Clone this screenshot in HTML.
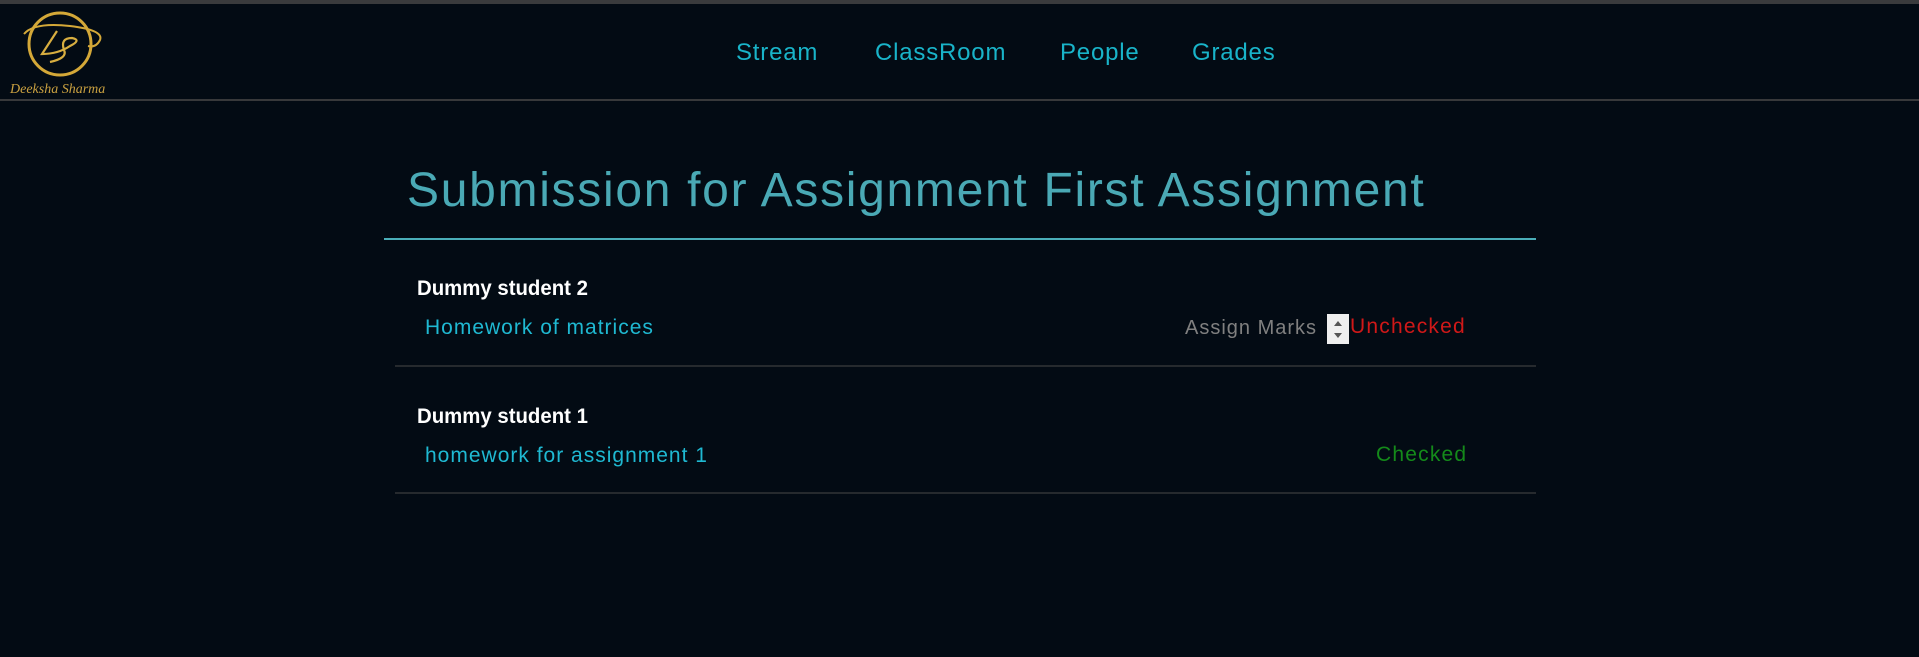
<!DOCTYPE html>
<html><head><meta charset="utf-8"><style>
html,body{margin:0;padding:0;width:1919px;height:657px;background:#030b14;overflow:hidden;font-family:"Liberation Sans",sans-serif;}
.top{position:absolute;left:0;top:0;width:1919px;height:4px;background:#3a3b3d;}
.hdrline{position:absolute;left:0;top:99px;width:1919px;height:2px;background:#38393b;}
.nav{position:absolute;top:39px;font-size:24px;color:#19b4c9;white-space:nowrap;letter-spacing:0.8px;}
.title{position:absolute;left:407px;top:163px;font-size:48px;color:#4aa9b5;white-space:nowrap;letter-spacing:1.7px;}
.tline{position:absolute;left:384px;top:238px;width:1152px;height:2px;background:#4aaeb9;}
.sep{position:absolute;left:395px;width:1141px;height:2px;background:#262a2e;}
.name{position:absolute;left:417px;font-size:21px;font-weight:bold;color:#fff;white-space:nowrap;transform:scaleX(0.97);transform-origin:left;}
.link{position:absolute;left:425px;font-size:21px;color:#1fb9d2;white-space:nowrap;letter-spacing:1px;}
</style></head><body>
<div class="top"></div>
<svg style="position:absolute;left:0;top:4px" width="120" height="96" viewBox="0 4 120 96">
<circle cx="60" cy="44" r="31" fill="none" stroke="#d4a838" stroke-width="3"/>
<path d="M24 34 Q34 22 70 26 Q104 30 100 40 Q96 48 88 46" fill="none" stroke="#d4a838" stroke-width="2"/>
<path d="M57 31 L42 54 Q58 54 70 46 Q82 40 72 38 Q60 38 64 50 Q68 58 50 62" fill="none" stroke="#d8ae40" stroke-width="2.2"/>
<text x="10" y="93" font-family="Liberation Serif,serif" font-style="italic" font-size="14" fill="#c9a040">Deeksha Sharma</text>
</svg>
<div class="hdrline"></div>
<div class="nav" style="left:736px">Stream</div>
<div class="nav" style="left:875px">ClassRoom</div>
<div class="nav" style="left:1060px">People</div>
<div class="nav" style="left:1192px">Grades</div>
<div class="title">Submission for Assignment First Assignment</div>
<div class="tline"></div>
<div class="name" style="top:277px">Dummy student 2</div>
<div class="link" style="top:316px">Homework of matrices</div>
<div style="position:absolute;left:1185px;top:317px;font-size:20px;color:#808080;white-space:nowrap;letter-spacing:1px">Assign Marks</div>
<div style="position:absolute;left:1327px;top:314px;width:22px;height:30px;background:#efefef"><div style="position:absolute;left:7px;top:7px;width:0;height:0;border-left:4px solid transparent;border-right:4px solid transparent;border-bottom:5px solid #555"></div><div style="position:absolute;left:7px;top:19px;width:0;height:0;border-left:4px solid transparent;border-right:4px solid transparent;border-top:5px solid #555"></div></div>
<div style="position:absolute;left:1350px;top:315px;font-size:21px;color:#d01818;white-space:nowrap;letter-spacing:1.2px">Unchecked</div>
<div class="sep" style="top:365px"></div>
<div class="name" style="top:405px">Dummy student 1</div>
<div class="link" style="top:444px">homework for assignment 1</div>
<div style="position:absolute;left:1376px;top:443px;font-size:21px;color:#148a1a;white-space:nowrap;letter-spacing:1.2px">Checked</div>
<div class="sep" style="top:492px"></div>
</body></html>
